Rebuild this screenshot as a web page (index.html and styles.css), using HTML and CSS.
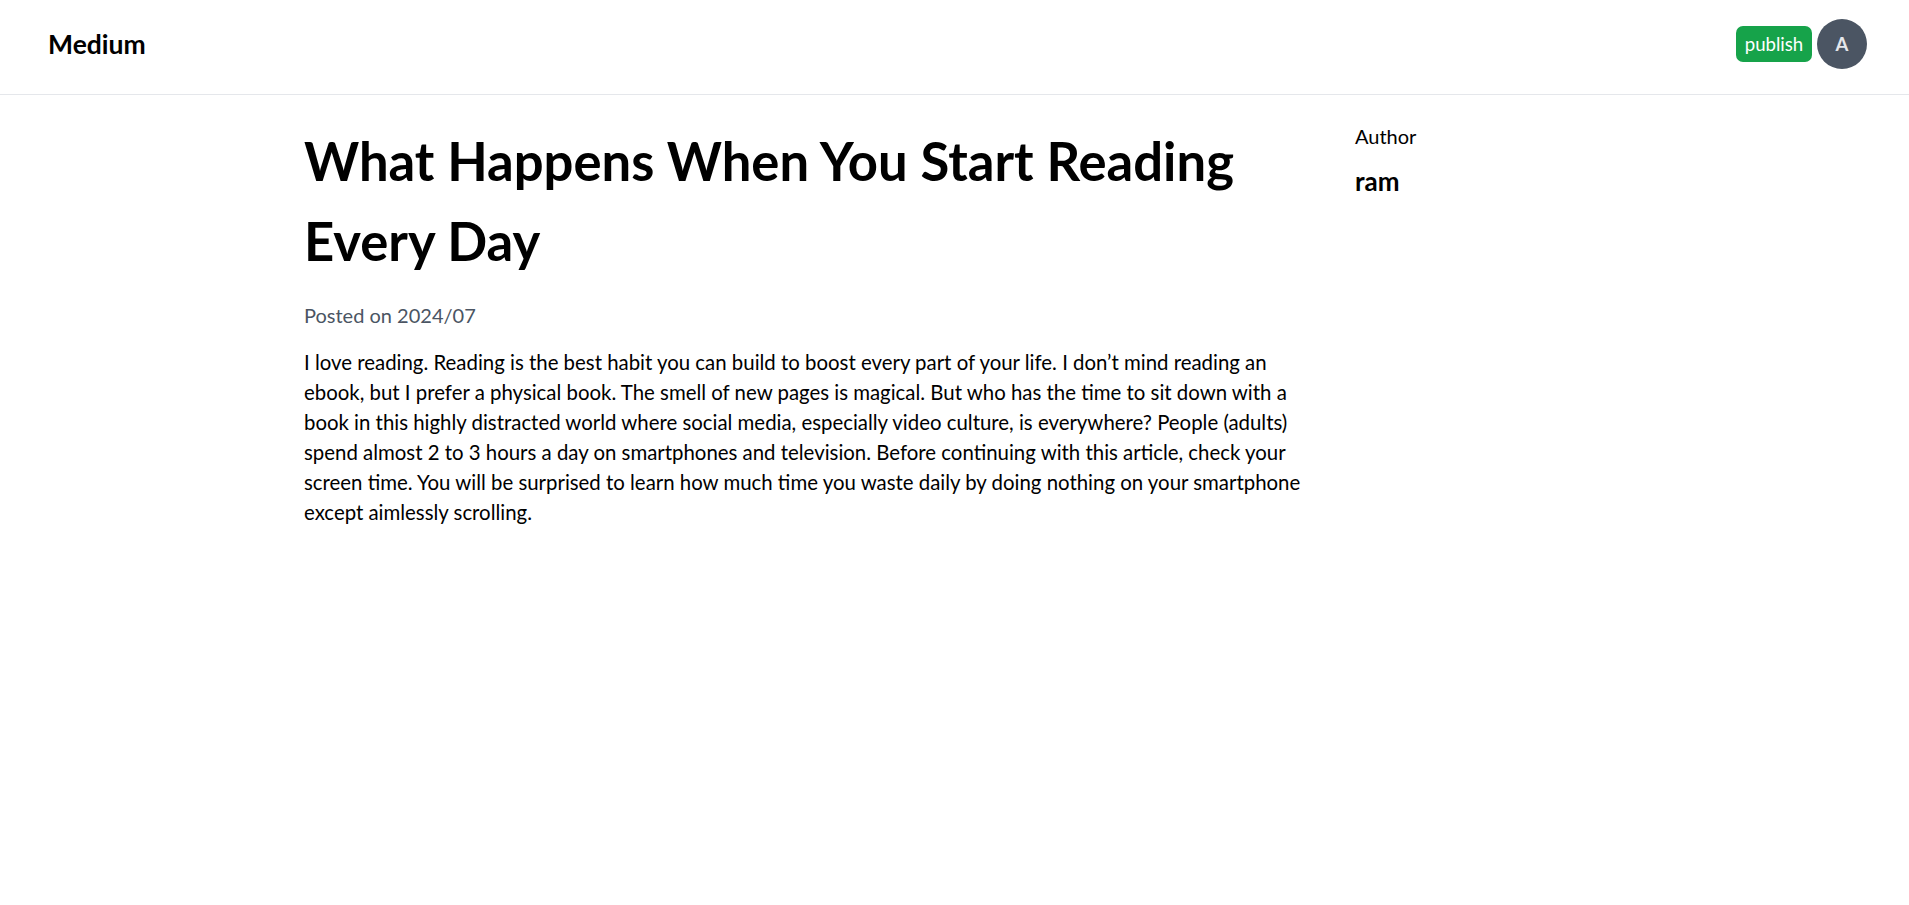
FILE: index.html
```html
<!DOCTYPE html>
<html lang="en">
<head>
<meta charset="utf-8">
<title>Medium</title>
<link rel="stylesheet" href="styles.css">
</head>
<body>
<header class="appbar">
  <div class="brand">Medium</div>
  <div class="actions">
    <button class="publish">publish</button>
    <div class="avatar">A</div>
  </div>
</header>
<div class="page">
  <main class="article">
    <h1 class="title">What Happens When You Start Reading Every Day</h1>
    <div class="posted">Posted on 2024/07</div>
    <p class="content">I love reading. Reading is the best habit you can build to boost every part of your life. I don’t mind reading an ebook, but I prefer a physical book. The smell of new pages is magical. But who has the time to sit down with a book in this highly distracted world where social media, especially video culture, is everywhere? People (adults) spend almost 2 to 3 hours a day on smartphones and television. Before continuing with this article, check your screen time. You will be surprised to learn how much time you waste daily by doing nothing on your smartphone except aimlessly scrolling.</p>
  </main>
  <aside class="sidebar">
    <div class="author-label">Author</div>
    <div class="author-name">ram</div>
  </aside>
</div>
</body>
</html>
```
FILE: styles.css
```css
* { box-sizing: border-box; }
body {
  margin: 0;
  font-family: Lato, "Open Sans", sans-serif;
  color: #000;
  background: #fff;
}
.appbar {
  display: flex;
  align-items: center;
  justify-content: space-between;
  padding: 19px 42px 25px 48px;
  border-bottom: 1px solid #e5e7eb;
}
.brand {
  font-size: 26.5px;
  font-weight: 700;
  line-height: 32px;
}
.actions {
  display: flex;
  align-items: center;
  gap: 5px;
}
.publish {
  font-family: Lato, "Open Sans", sans-serif;
  font-size: 18.6px;
  line-height: 24px;
  color: #fff;
  background: #16a34a;
  border: none;
  border-radius: 7px;
  height: 36px;
  width: 76px;
  padding: 0;
  cursor: pointer;
}
.avatar {
  width: 50px;
  height: 50px;
  border-radius: 50%;
  background: #4b5563;
  color: #e5e7eb;
  display: flex;
  align-items: center;
  justify-content: center;
  font-size: 18.5px;
  font-weight: 700;
}
.page {
  display: grid;
  grid-template-columns: 1010px 1fr;
  column-gap: 41px;
  padding: 26px 0 0 304px;
}
.title {
  margin: 0;
  font-size: 52.6px;
  font-weight: 700;
  line-height: 80px;
}
.posted {
  margin-top: 19px;
  font-size: 20px;
  line-height: 30px;
  color: #4b5563;
}
.content {
  margin: 17px 0 0;
  font-size: 20.4px;
  line-height: 30px;
}
.author-label {
  font-size: 20px;
  line-height: 28px;
  padding-top: 1px;
}
.author-name {
  margin-top: 15px;
  font-size: 26px;
  font-weight: 700;
  line-height: 32px;
}
```
